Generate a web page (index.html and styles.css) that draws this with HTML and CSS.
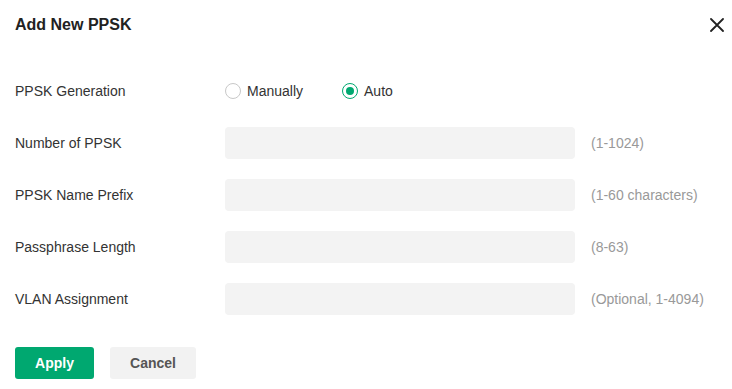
FILE: index.html
```html
<!DOCTYPE html>
<html>
<head>
<meta charset="utf-8">
<link rel="stylesheet" href="styles.css">
</head>
<body>
<div class="dialog">
  <div class="header">
    <h1 class="title">Add New PPSK</h1>
    <button class="close" aria-label="Close">
      <svg width="14" height="14" viewBox="0 0 14 14"><path d="M1 1L13 13M13 1L1 13" stroke="#222" stroke-width="1.8" stroke-linecap="round"/></svg>
    </button>
  </div>
  <div class="form">
    <div class="row">
      <div class="label">PPSK Generation</div>
      <div class="radios">
        <label class="radio"><span class="circle"></span>Manually</label>
        <label class="radio checked"><span class="circle"></span>Auto</label>
      </div>
    </div>
    <div class="row">
      <div class="label">Number of PPSK</div>
      <div class="input"></div>
      <div class="hint">(1-1024)</div>
    </div>
    <div class="row">
      <div class="label">PPSK Name Prefix</div>
      <div class="input"></div>
      <div class="hint">(1-60 characters)</div>
    </div>
    <div class="row">
      <div class="label">Passphrase Length</div>
      <div class="input"></div>
      <div class="hint">(8-63)</div>
    </div>
    <div class="row">
      <div class="label">VLAN Assignment</div>
      <div class="input"></div>
      <div class="hint">(Optional, 1-4094)</div>
    </div>
  </div>
  <div class="actions">
    <button class="btn primary">Apply</button>
    <button class="btn secondary">Cancel</button>
  </div>
</div>
</body>
</html>
```
FILE: styles.css
```css
* { box-sizing: border-box; }
html, body { margin: 0; padding: 0; background: #fff; }
body { font-family: "Liberation Sans", Arial, sans-serif; color: #333; }
.dialog { width: 732px; height: 389px; padding: 0 15px; }
.header { height: 50px; display: flex; align-items: center; justify-content: space-between; }
.title { margin: 0; font-size: 16px; font-weight: bold; color: #222; }
.close { border: 0; background: none; padding: 0; width: 14px; height: 14px; margin-right: -7px; display: flex; }
.form { margin-top: 25px; display: flex; flex-direction: column; gap: 20px; }
.row { height: 32px; display: flex; align-items: center; font-size: 14px; }
.label { width: 210px; color: #333; }
.radios { display: flex; align-items: center; }
.radio { display: flex; align-items: center; gap: 6px; color: #333; margin-right: 39px; }
.circle { width: 16px; height: 16px; border: 1px solid #c8c8c8; border-radius: 50%; display: flex; align-items: center; justify-content: center; }
.checked .circle { border-color: #00a870; }
.checked .circle::after { content: ""; width: 8px; height: 8px; border-radius: 50%; background: #00a870; }
.input { width: 350px; height: 32px; background: #f3f3f3; border-radius: 4px; }
.hint { margin-left: 16px; color: #999; }
.actions { margin-top: 32px; display: flex; gap: 16px; }
.btn { height: 32px; border: 0; border-radius: 3px; font-family: inherit; font-size: 14px; font-weight: bold; padding: 0; }
.primary { width: 79px; background: #00a870; color: #fff; }
.secondary { width: 86px; background: #f2f2f2; color: #555; }
```
